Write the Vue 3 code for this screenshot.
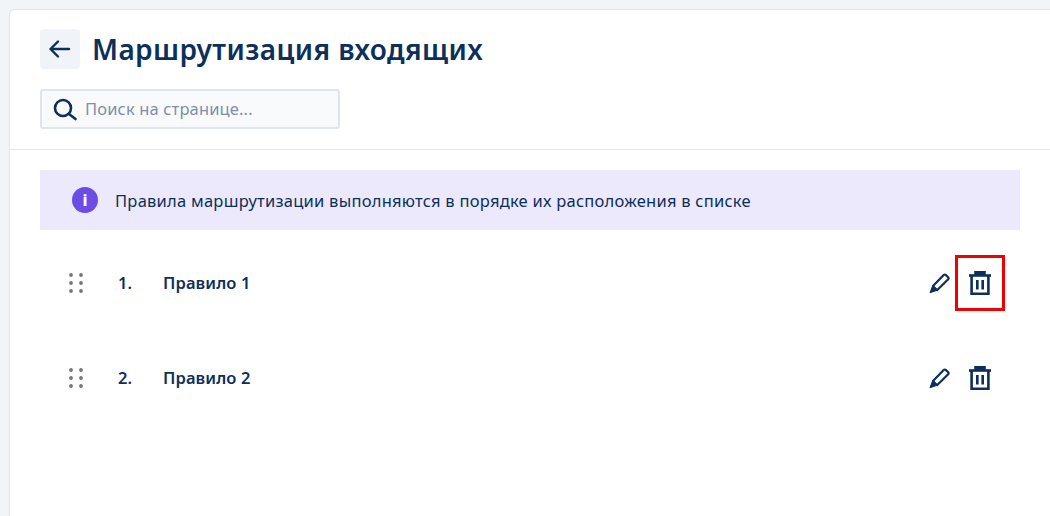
<script setup>
const rules = [
  { n: '1.', name: 'Правило 1', marked: true },
  { n: '2.', name: 'Правило 2', marked: false }
]
const dots = [0, 1, 2]
</script>

<template>
  <div class="page">
    <main class="card">
      <header class="head">
        <div class="title-row">
          <button class="back" aria-label="Назад">
            <svg width="24" height="24" viewBox="0 0 24 24" fill="none" stroke="#0c2f5c" stroke-width="2.4" stroke-linecap="round" stroke-linejoin="round">
              <path d="M21 12H2.5M10 4.5 2.5 12l7.5 7.5" />
            </svg>
          </button>
          <h1>Маршрутизация входящих</h1>
        </div>
        <div class="search">
          <svg width="26" height="26" viewBox="0 0 26 26" fill="none" stroke="#0c2f5c" stroke-width="2.6" stroke-linecap="round">
            <circle cx="10" cy="12" r="8" />
            <path d="m16 18 6.5 5" />
          </svg>
          <span class="hint">Поиск на странице...</span>
        </div>
      </header>
      <section class="body">
        <div class="notice">
          <span class="info">i</span>
          <span>Правила маршрутизации выполняются в порядке их расположения в списке</span>
        </div>
        <ul class="rules">
          <li v-for="r in rules" :key="r.n" class="rule">
            <svg class="grip" width="14" height="20" viewBox="0 0 14 20" fill="#757575">
              <template v-for="y in dots" :key="y">
                <circle cx="2" :cy="2 + y * 8" r="1.9" />
                <circle cx="12" :cy="2 + y * 8" r="1.9" />
              </template>
            </svg>
            <span class="num">{{ r.n }}</span>
            <span class="name">{{ r.name }}</span>
            <div class="actions">
              <svg width="24" height="24" viewBox="0 0 24 24" fill="none" stroke="#0c2f5c" stroke-width="2.2" stroke-linejoin="round">
                <path d="M6 15 16.7 3.9a1.4 1.4 0 0 1 2 0l2.5 2.4a1.4 1.4 0 0 1 0 2L10 19.2Z" />
                <path d="M5.6 14.8 3 21.8l7-2.5Z" fill="#0c2f5c" stroke-width="1" />
              </svg>
              <span class="trash" :class="{ marked: r.marked }">
                <svg width="24" height="26" viewBox="0 0 24 26" fill="none" stroke="#0c2f5c" stroke-width="2.6">
                  <path d="M1 5.5h22" />
                  <path d="M7 5V1.8h10V5" fill="#0c2f5c" stroke-width="1.6" />
                  <path d="M3.6 5.5v18.2h16.8V5.5" />
                  <path d="M9.3 10v9.5M14.7 10v9.5" />
                </svg>
              </span>
            </div>
          </li>
        </ul>
      </section>
    </main>
  </div>
</template>

<style>
html, body { margin: 0; background: #f2f5f8; overflow: hidden; }
</style>

<style scoped>
.page {
  height: 516px;
  padding: 9px 0 0 9px;
  box-sizing: border-box;
  font-family: "Noto Sans", "Liberation Sans", sans-serif;
  color: #0c2f5c;
}
.card {
  height: 507px;
  background: #fff;
  border: 1px solid #e0e5ec;
  border-width: 1px 0 0 1px;
  border-top-left-radius: 6px;
  box-sizing: border-box;
}
.head {
  height: 140px;
  padding: 19px 30px 0;
  box-sizing: border-box;
  border-bottom: 1px solid #e0e5ec;
}
.title-row { display: flex; align-items: center; gap: 13px; }
.back {
  width: 40px;
  height: 40px;
  padding: 0;
  border: 0;
  border-radius: 4px;
  background: #f0f3f7;
  display: flex;
  align-items: center;
  justify-content: center;
}
h1 { margin: -1px 0 0 -1px; font-size: 28px; line-height: 40px; font-weight: 600; letter-spacing: 0.42px; }
.search {
  margin-top: 20px;
  width: 300px;
  height: 40px;
  box-sizing: border-box;
  border: 2px solid #e0e5ec;
  border-radius: 3px;
  background: #f9fafc;
  display: flex;
  align-items: center;
  gap: 6px;
  padding-left: 11px;
  font-size: 16.5px;
  letter-spacing: 0.15px;
  color: #7f8fa8;
}
.hint { margin-top: -2px; }
.body { padding: 20px 30px 0; }
.notice {
  height: 60px;
  background: #ede9fd;
  display: flex;
  align-items: center;
  gap: 17px;
  padding-left: 32px;
  font-size: 16.5px;
  letter-spacing: 0.25px;
}
.info {
  width: 26px;
  height: 26px;
  border-radius: 50%;
  background: #6b4de6;
  color: #fff;
  font-weight: 800;
  font-size: 16px;
  display: flex;
  align-items: center;
  justify-content: center;
}
.rules { list-style: none; margin: 5px 0 0; padding: 0; }
.rule {
  height: 95px;
  display: flex;
  align-items: center;
  font-size: 16.5px;
  font-weight: 600;
  letter-spacing: 0.1px;
}
.grip { margin-left: 29px; }
.num { margin-left: 35px; width: 45px; }
.actions { margin-left: auto; margin-right: 28px; display: flex; align-items: center; gap: 17px; }
.trash { position: relative; display: flex; }
.trash.marked::after {
  content: "";
  position: absolute;
  left: -13px;
  top: -15px;
  width: 44px;
  height: 50px;
  border: 3px solid #f00000;
}
</style>
